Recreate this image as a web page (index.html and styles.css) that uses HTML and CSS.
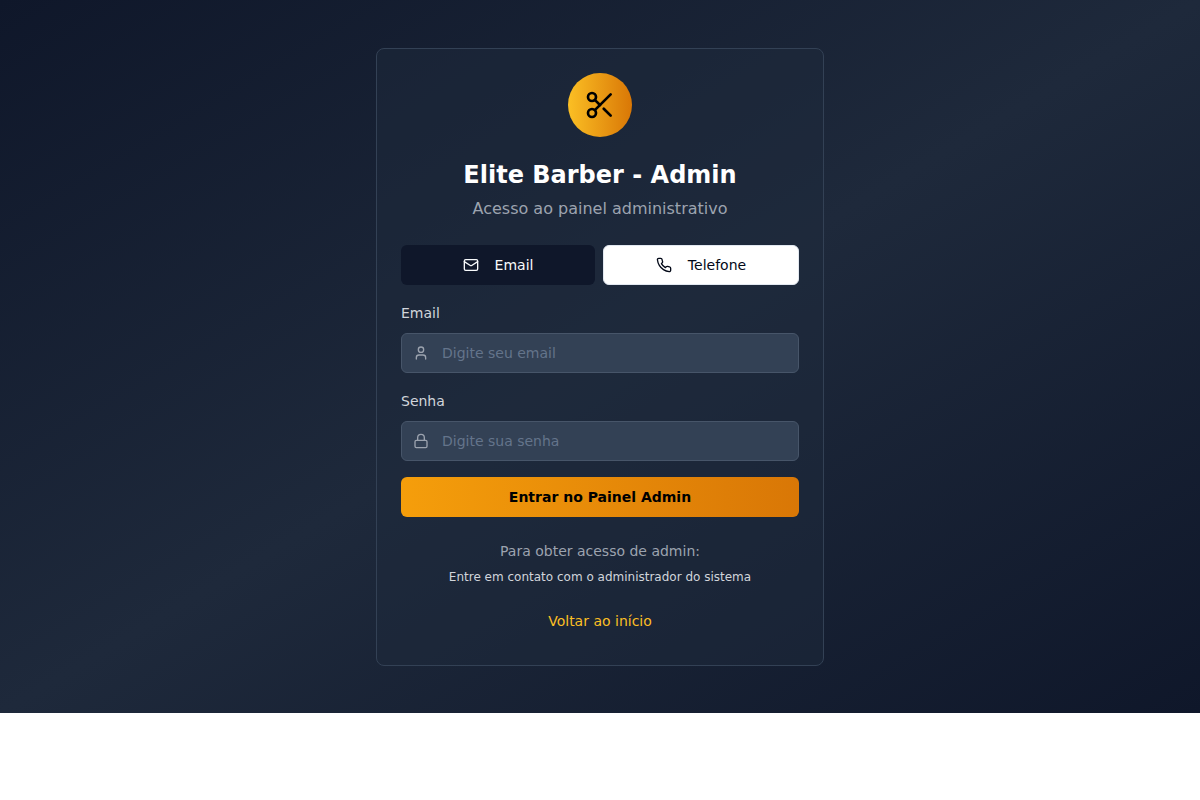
FILE: index.html
```html
<!DOCTYPE html>
<html lang="pt-BR">
<head>
<meta charset="utf-8">
<meta name="viewport" content="width=device-width, initial-scale=1">
<title>Elite Barber - Admin</title>
<link rel="stylesheet" href="styles.css">
</head>
<body>
<main class="page">
  <section class="card">
    <header class="card-header">
      <div class="logo">
        <svg class="icon icon-lg" viewBox="0 0 24 24" aria-hidden="true"><circle cx="6" cy="6" r="3"/><path d="M8.12 8.12 12 12"/><path d="M20 4 8.12 15.88"/><circle cx="6" cy="18" r="3"/><path d="M14.8 14.8 20 20"/></svg>
      </div>
      <h1 class="title">Elite Barber - Admin</h1>
      <p class="subtitle">Acesso ao painel administrativo</p>
    </header>

    <form class="form">
      <div class="methods">
        <button class="btn method method-active" type="button">
          <svg class="icon" viewBox="0 0 24 24" aria-hidden="true"><rect width="20" height="16" x="2" y="4" rx="2"/><path d="m22 7-8.97 5.7a1.94 1.94 0 0 1-2.06 0L2 7"/></svg>
          Email
        </button>
        <button class="btn method method-outline" type="button">
          <svg class="icon" viewBox="0 0 24 24" aria-hidden="true"><path d="M22 16.92v3a2 2 0 0 1-2.18 2 19.79 19.79 0 0 1-8.63-3.07 19.5 19.5 0 0 1-6-6 19.79 19.79 0 0 1-3.07-8.67A2 2 0 0 1 4.11 2h3a2 2 0 0 1 2 1.72 12.84 12.84 0 0 0 .7 2.81 2 2 0 0 1-.45 2.11L8.09 9.91a16 16 0 0 0 6 6l1.27-1.27a2 2 0 0 1 2.11-.45 12.84 12.84 0 0 0 2.81.7A2 2 0 0 1 22 16.92z"/></svg>
          Telefone
        </button>
      </div>

      <div class="field">
        <label class="label" for="email">Email</label>
        <div class="control">
          <input class="input" id="email" type="email" placeholder="Digite seu email">
          <svg class="icon control-icon" viewBox="0 0 24 24" aria-hidden="true"><path d="M19 21v-2a4 4 0 0 0-4-4H9a4 4 0 0 0-4 4v2"/><circle cx="12" cy="7" r="4"/></svg>
        </div>
      </div>

      <div class="field">
        <label class="label" for="senha">Senha</label>
        <div class="control">
          <input class="input" id="senha" type="password" placeholder="Digite sua senha">
          <svg class="icon control-icon" viewBox="0 0 24 24" aria-hidden="true"><rect width="18" height="11" x="3" y="11" rx="2"/><path d="M7 11V7a5 5 0 0 1 10 0v4"/></svg>
        </div>
      </div>

      <button class="btn submit" type="submit">Entrar no Painel Admin</button>
    </form>

    <footer class="help">
      <p class="help-title">Para obter acesso de admin:</p>
      <p class="help-text">Entre em contato com o administrador do sistema</p>
      <a class="back" href="#">Voltar ao início</a>
    </footer>
  </section>
</main>
</body>
</html>
```

FILE: styles.css
```css
*,
*::before,
*::after {
  box-sizing: border-box;
}

body {
  margin: 0;
  background: #fff;
  font-family: "DejaVu Sans", sans-serif;
  font-size: 16px;
  line-height: 24px;
}

h1,
p {
  margin: 0;
}

.page {
  display: flex;
  justify-content: center;
  padding: 48px 16px 47px;
  background: linear-gradient(to bottom right, #0f172a, #1e293b, #0f172a);
}

.card {
  width: 100%;
  max-width: 448px;
  padding: 24px;
  border: 1px solid #334155;
  border-radius: 8px;
  background: rgba(30, 41, 59, 0.5);
}

.card-header {
  display: flex;
  flex-direction: column;
  align-items: center;
  gap: 6px;
  margin-bottom: 24px;
  text-align: center;
}

.logo {
  display: flex;
  align-items: center;
  justify-content: center;
  width: 64px;
  height: 64px;
  margin-bottom: 16px;
  border-radius: 50%;
  background: linear-gradient(to right, #fbbf24, #d97706);
  color: #000;
}

.icon {
  flex: none;
  width: 16px;
  height: 16px;
  fill: none;
  stroke: currentColor;
  stroke-width: 2;
  stroke-linecap: round;
  stroke-linejoin: round;
}

.icon-lg {
  width: 32px;
  height: 32px;
}

.title {
  color: #fff;
  font-size: 24px;
  font-weight: 700;
  line-height: 32px;
}

.subtitle {
  color: #9ca3af;
}

.form {
  display: flex;
  flex-direction: column;
  gap: 16px;
}

.methods {
  display: flex;
  gap: 8px;
}

.btn {
  display: flex;
  align-items: center;
  justify-content: center;
  height: 40px;
  padding: 0 16px;
  border: 0;
  border-radius: 6px;
  font-family: inherit;
  font-size: 14px;
  line-height: 20px;
  cursor: pointer;
}

.method {
  flex: 1;
  gap: 16px;
}

.method-active {
  background: #0f172a;
  color: #f8fafc;
}

.method-outline {
  border: 1px solid #e2e8f0;
  background: #fff;
  color: #020817;
}

.field {
  display: flex;
  flex-direction: column;
  gap: 8px;
}

.label {
  color: #d1d5db;
  font-size: 14px;
}

.control {
  position: relative;
}

.control-icon {
  position: absolute;
  top: 12px;
  left: 12px;
  color: #9ca3af;
}

.input {
  display: block;
  width: 100%;
  height: 40px;
  padding: 8px 12px 8px 40px;
  border: 1px solid #475569;
  border-radius: 6px;
  background: #334155;
  color: #fff;
  font-family: inherit;
  font-size: 14px;
  line-height: 20px;
}

.input::placeholder {
  color: #64748b;
  opacity: 1;
}

.submit {
  background: linear-gradient(to right, #f59e0b, #d97706);
  color: #000;
  font-weight: 700;
}

.help {
  display: flex;
  flex-direction: column;
  align-items: center;
  margin-top: 24px;
  text-align: center;
}

.help-title {
  color: #9ca3af;
  font-size: 14px;
  line-height: 20px;
}

.help-text {
  margin-top: 8px;
  color: #d1d5db;
  font-size: 12px;
  line-height: 16px;
}

.back {
  margin-top: 16px;
  padding: 10px 16px;
  color: #fbbf24;
  font-size: 14px;
  line-height: 20px;
  text-decoration: none;
}
```
